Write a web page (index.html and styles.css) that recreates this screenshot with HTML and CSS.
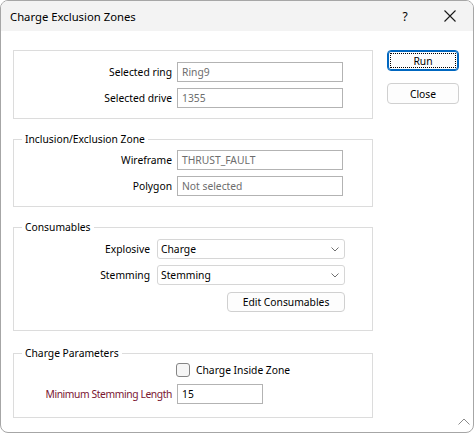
FILE: index.html
```html
<!DOCTYPE html>
<html>
<head>
<meta charset="utf-8">
<link rel="stylesheet" href="styles.css">
</head>
<body>
<div class="window">
  <div class="titlebar">
    <span class="title">Charge Exclusion Zones</span>
    <span class="help">?</span>
    <span class="close"><svg width="12" height="12" viewBox="0 0 12 12"><path d="M0.5 0.5 L11.5 11.5 M11.5 0.5 L0.5 11.5" stroke="#1a1a1a" stroke-width="1.1" fill="none"/></svg></span>
  </div>
  <div class="content">
    <div class="main">
      <fieldset class="group g1">
        <div class="rows">
          <div class="row"><span class="lbl">Selected ring</span><div class="field ro">Ring9</div></div>
          <div class="row"><span class="lbl">Selected drive</span><div class="field ro">1355</div></div>
        </div>
      </fieldset>
      <fieldset class="group g2">
        <legend>Inclusion/Exclusion Zone</legend>
        <div class="rows">
          <div class="row"><span class="lbl">Wireframe</span><div class="field ro">THRUST_FAULT</div></div>
          <div class="row"><span class="lbl">Polygon</span><div class="field ro">Not selected</div></div>
        </div>
      </fieldset>
      <fieldset class="group g3">
        <legend>Consumables</legend>
        <div class="rows">
          <div class="row gap7"><span class="lbl lbl3">Explosive</span><div class="select"><span>Charge</span><svg width="8" height="5" viewBox="0 0 8 5"><path d="M0.5 0.5 L4 4 L7.5 0.5" stroke="#707070" fill="none"/></svg></div></div>
          <div class="row gap7"><span class="lbl lbl3">Stemming</span><div class="select"><span>Stemming</span><svg width="8" height="5" viewBox="0 0 8 5"><path d="M0.5 0.5 L4 4 L7.5 0.5" stroke="#707070" fill="none"/></svg></div></div>
          <div class="row btnrow"><button class="btn edit">Edit Consumables</button></div>
        </div>
      </fieldset>
      <fieldset class="group g4">
        <legend>Charge Parameters</legend>
        <div class="rows">
          <div class="row checkrow"><span class="checkbox"></span><span>Charge Inside Zone</span></div>
          <div class="row"><span class="lbl red">Minimum Stemming Length</span><div class="field short">15</div></div>
        </div>
      </fieldset>
    </div>
    <div class="side">
      <button class="btn run">Run</button>
      <button class="btn">Close</button>
    </div>
  </div>
  <svg class="grip" width="12" height="7" viewBox="0 0 12 7"><path d="M0.5 6.5 L6 1 L11.5 6.5" stroke="#8a8a8a" fill="none"/></svg>
</div>
</body>
</html>
```
FILE: styles.css
```css
* { box-sizing: border-box; }
body {
  margin: 0;
  background: #ffffff;
  font-family: "Noto Sans", "Open Sans", sans-serif;
  font-size: 10.3px;
  color: #000;
}
.window {
  width: 474px;
  height: 433px;
  border: 1px solid #a6a6a6;
  border-radius: 8px;
  overflow: hidden;
  position: relative;
  background: #fff;
}
.titlebar {
  height: 30px;
  background: #f3f3f3;
  display: flex;
  align-items: center;
  padding-left: 9px;
}
.title { font-size: 11.3px; }
.help {
  margin-left: auto;
  width: 10px;
  text-align: center;
  font-size: 12px;
  margin-right: 34px;
}
.close {
  width: 12px;
  height: 12px;
  margin-right: 17px;
  display: flex;
}
.content {
  display: flex;
  padding: 19px 0 0 12px;
  gap: 14px;
}
.main {
  width: 360px;
  display: flex;
  flex-direction: column;
}
.group {
  margin: 0;
  padding: 0;
  border: 1px solid #dcdcdc;
  min-width: 0;
}
.group legend {
  margin-left: 8px;
  padding: 0 3px;
  height: 16px;
  line-height: 16px;
}
.g1 { padding: 11px 0 10px; }
.g2 { margin-top: 12px; padding: 3px 0 10px; }
.g3 { margin-top: 12px; padding: 4px 0 18px; }
.g4 { margin-top: 14px; padding: 1px 0 13px; }
.rows {
  display: flex;
  flex-direction: column;
  gap: 6px;
}
.g3 .btnrow { margin-top: 1px; }
.row {
  display: flex;
  align-items: center;
  height: 20px;
  gap: 5px;
}
.row.gap7 { gap: 7px; }
.lbl {
  width: 158px;
  text-align: right;
  white-space: nowrap;
}
.lbl3 { width: 136px; }
.red { color: #7a1632; letter-spacing: -0.4px; }
.field {
  width: 166px;
  height: 20px;
  border: 1px solid #b3b3b3;
  padding-left: 4px;
  line-height: 18px;
  white-space: nowrap;
}
.field.short { width: 86px; }
.ro { color: #6d6d6d; }
.select {
  width: 188px;
  height: 20px;
  border: 1px solid #d6d6d6;
  border-radius: 3px;
  padding: 0 5px 0 3px;
  display: flex;
  align-items: center;
  justify-content: space-between;
  line-height: 18px;
}
.btnrow { padding-left: 213px; }
.btn {
  font-family: inherit;
  font-size: 10.3px;
  color: #000;
  background: #fdfdfd;
  border: 1px solid #d0d0d0;
  border-radius: 4px;
  padding: 0;
  height: 21px;
  line-height: 18px;
}
.edit { width: 118px; height: 20px; }
.checkrow {
  height: 16px;
  padding-left: 162px;
  gap: 6px;
}
.checkbox {
  width: 14px;
  height: 14px;
  border: 1px solid #858585;
  border-radius: 3px;
  background: #f6f6f6;
}
.side {
  display: flex;
  flex-direction: column;
  gap: 12px;
  width: 72px;
}
.run {
  border: 1px solid #0067c0;
  box-shadow: inset 0 0 0 1px #0067c0;
  outline: 1px dotted #000;
  outline-offset: -4px;
}
.grip {
  position: absolute;
  right: 3px;
  bottom: 7px;
}
```
